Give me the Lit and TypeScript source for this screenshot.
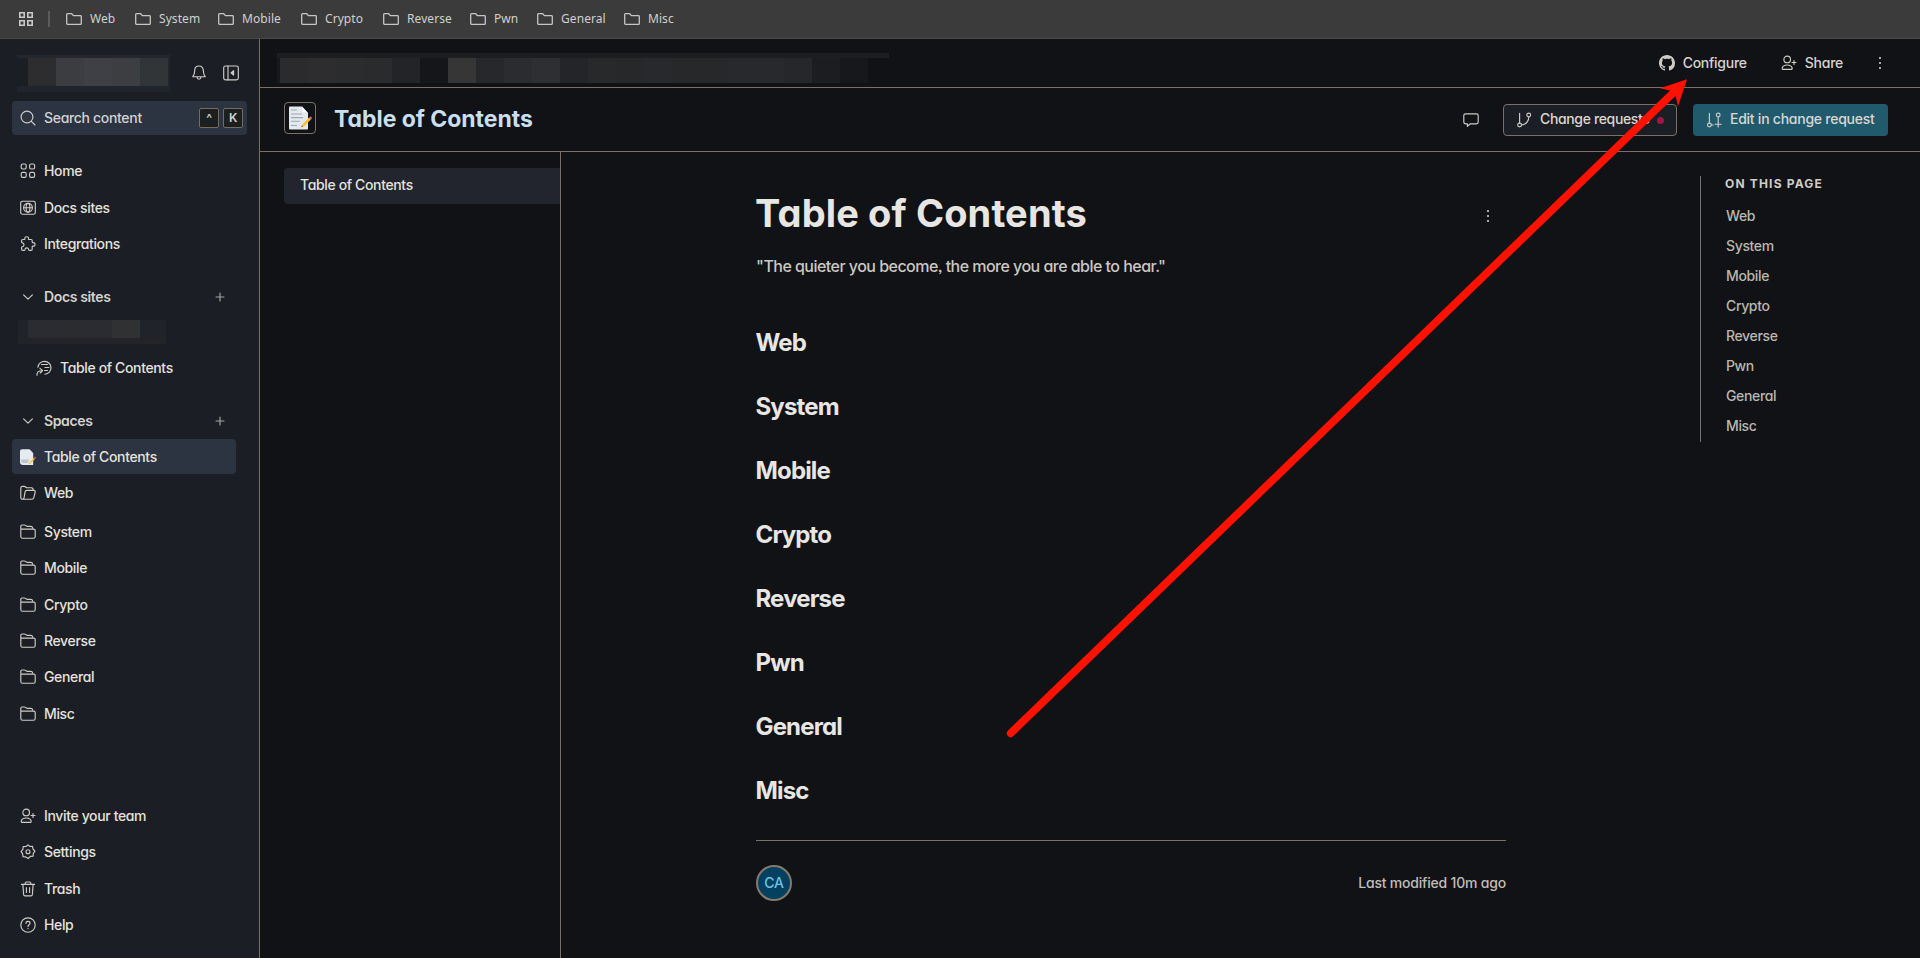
import { LitElement, html, css, svg } from "lit";
import { customElement } from "lit/decorators.js";

const stroke = (body: unknown, size = 16) => html`<svg
  class="ic" width=${size} height=${size} viewBox="0 0 16 16" fill="none"
  stroke="currentColor" stroke-width="1.150" stroke-linecap="round" stroke-linejoin="round">${body}</svg>`;

const icons = {
  home: () => stroke(svg`<rect x="1.200" y="1" width="5" height="5" rx="1.400"/><rect x="9.600" y="1" width="5" height="5" rx="1.400"/><rect x="1.200" y="9.400" width="5" height="5" rx="1.400"/><rect x="9.600" y="9.400" width="5" height="5" rx="1.400"/>`),
  site: () => stroke(svg`<rect x=".7" y="1.200" width="14.600" height="13" rx="1.800"/><circle cx="8" cy="7.700" r="4.400"/><ellipse cx="8" cy="7.700" rx="1.900" ry="4.400"/><path d="M3.600 7.700h8.800"/>`),
  puzzle: () => stroke(svg`<path d="M1.600 4.600c0-.7.4-1.100 1.100-1.100h1.600c.5 0 .7-.3.600-.8C4.700 1.400 5.500.7 6.700.7s2 .7 1.800 2c-.1.500.1.800.6.800h2c.7 0 1.100.4 1.100 1.100v1.500c0 .5.3.7.8.6 1.300-.1 2 .5 2 1.700s-.7 1.800-2 1.700c-.5-.1-.8.1-.8.6v2.500c0 .7-.4 1.100-1.100 1.100H9.300c-.5 0-.7-.3-.7-.8-.1-1-.8-1.600-1.800-1.600s-1.700.6-1.800 1.600c0 .5-.2.800-.7.800H2.700c-.7 0-1.100-.4-1.100-1.100v-1.800c0-.5.3-.7.7-.7 1.100-.1 1.700-.8 1.700-1.900S3.400 7 2.300 6.800c-.4 0-.7-.2-.7-.7z"/>`),
  search: () => stroke(svg`<circle cx="7" cy="7" r="5.900"/><path d="M11.300 11.300 15 15"/>`),
  bell: () => stroke(svg`<path d="M8 1C5.200 1 3.700 3 3.700 5.400c0 3.600-.8 4.800-1.900 6.300h12.400c-1.100-1.500-1.900-2.700-1.900-6.300C12.300 3 10.800 1 8 1zM6 12.200c.2 1.300.9 2 2 2s1.800-.7 2-2"/>`),
  panel: () => stroke(svg`<rect x=".7" y="1" width="14.600" height="13.800" rx="1.800"/><path d="M5 1v13.800"/><path d="M10.600 5.700v4.400L8 7.900z" fill="currentColor"/>`),
  chevron: () => stroke(svg`<path d="m3.600 5.800 4.400 4.400 4.400-4.400"/>`),
  plus: () => stroke(svg`<path d="M8 4v8M4 8h8"/>`),
  link: () => stroke(svg`<path d="M2 7.200A6.500 6.500 0 1 1 9 14.300M5.500 4.500h6M9 7.500h4M8.500 10.500h3M1 15.300c-.3-3 1.200-4.600 5-4.600M4 8.300l2.600 2.400L4.200 13"/>`),
  folder: () => stroke(svg`<path d="M.8 5.100v7.300c0 1.100.8 1.800 1.800 1.800h10.800c1.100 0 1.800-.8 1.800-1.800V6.600c0-1-.6-1.500-1.600-1.500H.8zV2.600C.8 1.600 1.300 1 2.200 1h2.200c1.200 0 1.400 1.300 2.600 1.300h3.800c1 0 1.700.7 1.900 1.700"/>`),
  folderOpen: () => stroke(svg`<path d="M2.700 14.200c-1.200 0-1.900-.7-1.900-1.800V3c0-1.100.6-1.700 1.600-1.700h1.900c1.200 0 1.500 1.400 2.700 1.400h4.400c1.200 0 1.800.8 1.800 2.300M2.700 14.200c1 0 1.200-.6 1.400-1.500L5 7.100C5.200 5.900 5.700 5.400 6.700 5.400h7.200c1 0 1.500.7 1.300 1.600l-1.400 5.700c-.3 1-.8 1.500-1.800 1.500z"/>`),
  invite: () => stroke(svg`<circle cx="6.200" cy="4.400" r="3.300"/><path d="M1.200 13.200c.4-2 2.400-3.200 5-3.200s4.600 1.200 5 3.200c.1.700-.3 1.200-1 1.200h-8c-.7 0-1.100-.5-1-1.200zM13 5.500v4M11 7.500h4"/>`),
  gear: () => stroke(svg`<path d="M8 .9 9.900 2.500l2.600-.1.500 2.600 1.900 2.200-1.600 2.100-.2 2.800-2.700.3L8.200 14.500l-2.500-1.600-2.600-.1-.5-2.900L1.100 7.600 2.900 5.300l.3-2.700 2.800-.1z"/><circle cx="8" cy="7.700" r="2"/>`),
  trash: () => stroke(svg`<path d="M1.400 3.400h13.200M4.900 3.400l.5-1.500c.2-.6.500-.9 1.100-.9h3c.6 0 .9.300 1.100.9l.5 1.500M2.900 3.400l.7 10c.1.900.6 1.400 1.400 1.400h6c.8 0 1.300-.5 1.400-1.400l.7-10M6.400 6.500v5M9.600 6.500v5"/>`),
  help: () => stroke(svg`<circle cx="8" cy="8" r="7.200"/><path d="M6 6.300c0-1.200.8-1.900 2-1.900s2 .7 2 1.800c0 1.500-2 1.500-2 3.200M8 11.400v.2"/>`),
  comment: () => stroke(svg`<path d="M2.500 1.900h11c1 0 1.700.7 1.700 1.700v6.500c0 1-.7 1.700-1.700 1.700H7.400l-3 2.500v-2.500H2.500c-1 0-1.700-.7-1.700-1.700V3.600c0-1 .7-1.700 1.700-1.700z"/>`),
  branch: () => stroke(svg`<circle cx="3.600" cy="13" r="1.900"/><circle cx="12.700" cy="3" r="1.900"/><path d="M3.600 11V1.300M12.700 5c0 4.300-1.600 7-7.200 8"/>`),
  branchPlus: () => stroke(svg`<circle cx="3.400" cy="13" r="1.900"/><circle cx="12.200" cy="3" r="1.900"/><path d="M3.400 11V1.300M12.200 5v9.900M9.200 12.200h6M5.400 13h1.800"/>`),
  dots: () => html`<svg class="ic" width="16" height="16" viewBox="0 0 16 16" fill="currentColor"><circle cx="8" cy="3" r="1.100"/><circle cx="8" cy="8" r="1.100"/><circle cx="8" cy="13" r="1.100"/></svg>`,
  github: () => html`<svg class="ic" width="16" height="16" viewBox="0 0 16 16" fill="currentColor"><path d="M8 0C3.580 0 0 3.580 0 8c0 3.540 2.290 6.530 5.470 7.590.4.070.55-.17.55-.38 0-.19-.01-.82-.01-1.490-2.010.37-2.530-.49-2.690-.94-.09-.23-.48-.94-.82-1.130-.28-.15-.68-.52-.01-.53.63-.01 1.080.58 1.230.82.72 1.210 1.870.87 2.330.66.07-.52.28-.87.51-1.070-1.780-.2-3.640-.89-3.640-3.950 0-.87.31-1.590.82-2.150-.08-.2-.36-1.020.08-2.120 0 0 .67-.21 2.200.82.64-.18 1.320-.27 2-.27s1.360.09 2 .27c1.530-1.040 2.200-.82 2.200-.82.44 1.100.16 1.920.08 2.120.51.56.82 1.270.82 2.150 0 3.070-1.870 3.750-3.650 3.950.29.25.54.73.54 1.480 0 1.070-.01 1.930-.01 2.200 0 .21.15.46.55.38A8.010 8.010 0 0 0 16 8c0-4.420-3.580-8-8-8z"/></svg>`,
  memo: (s: number) => html`<svg class="ic" width=${s} height=${s} viewBox="0 0 24 24">
    <path d="M1 1.800C1 1 1.500.5 2.300.5H14l6 6.500v15.500c0 .6-.4 1-1 1H2.300c-.8 0-1.300-.5-1.300-1.300z" fill="#e3e9ed"/>
    <path d="M14 .5c.8 3 .5 5 0 6 2-.4 4-.3 6 .5z" fill="#f8fafb"/>
    <path d="M3 4h6M3 8h11M3 11.600h12M3 15.200h9M3 19.500h6" stroke="#9daab2" stroke-width="1.100"/>
    <path d="m13.300 21.200 1-2.800L21 11.600l1.900 1.900-6.800 6.800z" fill="#fbc02d"/><path d="m13.300 21.200.6-1.600 1 1z" fill="#5d4037"/>
    <path d="m21 11.600 1-.9c.8-.7 2.500.9 1.800 1.800l-.9 1z" fill="#e0559a"/></svg>`,
  memoSmall: () => html`<svg class="ic" width="16" height="16" viewBox="0 0 16 16">
    <path d="M0 2.500C0 1 .8.200 2.300.200H9.500L13.200 4v12H3C1 16 0 15 0 13z" fill="#e6ebef"/>
    <path d="M1 10.500h8.500L7.500 14H3C1.500 14 1 12.500 1 10.500z" fill="#bdc6cc"/>
    <path d="m8.300 14.800 5.300-5.700 1.200 1.100-5.400 5z" fill="#fbc02d"/><path d="m13.700 8.900 1-1c.6-.4 1.500.4 1.100 1.100l-1 1z" fill="#d9648f"/></svg>`,
};

const TOPICS = ["Web", "System", "Mobile", "Crypto", "Reverse", "Pwn", "General", "Misc"];

const cells = (colors: string[]) => colors.map((c) => html`<i style="background:${c}"></i>`);

@customElement("app-root")
export class AppRoot extends LitElement {
  static styles = css`
    :host { display: flex; flex-direction: column; position: relative; width: 1920px; height: 958px; overflow: hidden;
      background: #111216; color: #e4e2de; font: 500 14px/20px Inter, "Liberation Sans", sans-serif;
      font-feature-settings: "cv11", "ss03"; letter-spacing: -0.36px; }
    * { box-sizing: border-box; }
    .ic { display: block; flex: none; color: #cfccc6; }
    h1, h2, h3, p { margin: 0; }

    .bookmarks { display: flex; align-items: center; height: 39px; flex: none; padding: 0 0 1px 19px; background: #3b3b3b;
      border-bottom: 1px solid #4a4b49; color: #d0d0cf; font: 400 12px/16px "Noto Sans", "Open Sans", sans-serif; letter-spacing: 0.070px; }
    .bookmarks .bar { width: 2px; height: 16px; margin: 0 16px 0 15px; background: #5b5b5b; }
    .marks { display: grid; grid-template-columns: 69px 83px 83px 82px 87px 67px 87px 60px; }
    .mark { display: flex; align-items: center; gap: 8px; }

    .app { display: flex; flex: 1; min-height: 0; }
    .side { width: 260px; flex: none; display: flex; flex-direction: column; background: #1c1e26; border-right: 1px solid #7a7164; }
    .brand { display: flex; height: 62px; padding: 16px 0 0 17px; }
    .brand .ic { margin-top: 10px; }
    .brand .ic + .ic { margin-left: 16px; }
    .mosaic { display: flex; }
    .mosaic i { flex: 1; }
    .m-brand { width: 153px; height: 37px; margin-right: 21px; border-top: 3px solid #24272c; border-bottom: 6px solid #20242d; }
    .m-brand i:first-child { flex: 0 0 11px; } .m-brand i:last-child { flex: 0 0 2px; }
    .search { display: flex; align-items: center; height: 34px; width: 235px; margin-left: 12px; padding: 0 4px 0 8px; border-radius: 4px; background: #2c3341; color: #d4d2ce; }
    .search span { margin-left: 8px; flex: 1; letter-spacing: -0.320px; }
    kbd { width: 20px; height: 20px; margin-left: 4px; border: 1px solid #756b5e; border-radius: 2px; background: #1c1f20; font: 600 12px/17px Inter, sans-serif; text-align: center; }
    .row { display: flex; align-items: center; height: 36.300px; width: 224px; margin-left: 12px; padding-left: 8px; gap: 8px; border-radius: 4px; flex: none; }
    .row.active { background: #2c3341; height: 35px; margin-top: .6px; margin-bottom: .8px; }
    .row.sub { padding-left: 24px; margin-top: 5.600px; }
    .row.head { font-weight: 600; color: #d4d2cd; }
    .row.head span { flex: 1; }
    .row.head .ic:last-child { margin-right: 8px; color: #a6a49f; }
    .first { margin-top: 18.300px; }
    .g1 { margin-top: 16.200px; } .g2 { margin-top: 16.600px; } .g3 { margin-top: 2.500px; }
    .m-side { width: 148px; height: 24px; margin: 5.300px 0 0 18px; border-bottom: 6px solid #222427; flex: none; }
    .m-side i { flex: 0 0 28px; }
    .m-side i:first-child { flex: 0 0 10px; } .m-side i:last-child { flex: 1; }
    .grow { flex: 1; }
    .foot { padding-bottom: 14.800px; }

    .main { flex: 1; min-width: 0; display: flex; flex-direction: column; }
    .top { display: flex; height: 49px; flex: none; padding-right: 32px; border-bottom: 1px solid #7a7164; }
    .m-top { width: 612px; height: 30px; margin: 14px 0 0 17px; border-top: 5px solid #1d1e20; }
    .m-top i { flex: 0 0 28px; } .m-top i:first-child { flex: 0 0 3px; }
    .act { display: flex; align-items: center; gap: 8px; color: #d6d3ce; letter-spacing: -0.260px; }
    .act span { margin-top: -1px; }
    .share { margin: 0 29px 0 34px; }
    .titlebar { display: flex; align-items: center; height: 64px; flex: none; padding: 0 32px 0 24px; border-bottom: 1px solid #7a7164; }
    .emoji { display: grid; place-items: center; width: 32px; height: 32px; margin-top: -3px; border: 1px solid #7a7164; border-radius: 4px; }
    .titlebar h1 { margin: -2px 0 0 18px; font-size: 23px; line-height: 32px; font-weight: 700; color: #c9dfef; letter-spacing: -0.040px; }
    .btn { display: flex; align-items: center; height: 32px; border-radius: 4px; margin-top: 1px; color: #dad7d2; letter-spacing: -0.250px; }
    .btn span { margin-top: -1.500px; }
    .change { width: 174px; margin-left: 24px; margin-right: 16px; padding-left: 12px; border: 1px solid #7a7164; background: #1c1e26; gap: 8px; letter-spacing: -0.350px; }
    .dot { width: 7px; height: 7px; border-radius: 50%; background: #9c1848; margin-left: -1px; }
    .edit { width: 195px; padding-left: 13px; gap: 8px; background: #225a6d; }
    .body { display: flex; flex: 1; min-height: 0; }
    .pages { width: 301px; flex: none; padding: 16px 0 0 24px; border-right: 1px solid #7a7164; }
    .pages div { height: 36px; padding: 7px 0 0 16px; border-radius: 4px 0 0 4px; background: #22252e; }
    .doc { width: 750px; margin-left: 195px; flex: none; }
    .doc .hd { display: flex; justify-content: space-between; padding: 38px 10px 0 0; }
    .doc h1 { margin: -1px 0 0 -1px; font-size: 38px; line-height: 48px; font-weight: 700; color: #e8e6e3; letter-spacing: 0.140px; }
    .hd .ic { margin-top: 18px; }
    .doc p { margin: 17px 0 17px; font-size: 16px; line-height: 24px; font-weight: 450; color: #cbc8c2; letter-spacing: -0.530px; }
    .doc h2 { height: 64px; margin-left: -.5px; padding-top: 32px; font-size: 24px; line-height: 32px; font-weight: 650; color: #e8e6e3; letter-spacing: -0.850px; }
    .doc .end { display: flex; justify-content: space-between; align-items: center; margin-top: 33px; padding-top: 24px; border-top: 1px solid #7a7164; color: #c1beb8; font-weight: 450; letter-spacing: -0.200px; }
    .avatar { width: 36px; height: 36px; border: 2px solid #857a6e; border-radius: 50%; background: #04405f; color: #6cc3e4; text-align: center; line-height: 32px; }
    .toc { height: 266px; margin: 24px 0 0 194px; padding: 0 0 0 24px; border-left: 1px solid #7a7164; color: #bab7b0; font-weight: 450; }
    .toc h3 { font-size: 12px; line-height: 16px; margin-bottom: 9px; font-weight: 700; color: #cfccc6; letter-spacing: 1.180px; }
    .toc div { height: 30px; line-height: 30px; padding-left: 1px; }
    .arrow { position: absolute; left: 0; top: 0; pointer-events: none; }
  `;

  row(icon: unknown, label: string, cls = "") {
    return html`<div class="row ${cls}">${icon}<span>${label}</span></div>`;
  }
  head(label: string, cls: string) {
    return html`<div class="row head ${cls}">${icons.chevron()}<span>${label}</span>${icons.plus()}</div>`;
  }

  render() {
    return html`
      <div class="bookmarks">
        <svg width="14" height="14" viewBox="0 0 14 14" fill="none" stroke="#c9c9c9" stroke-width="1.600"><path d="M.8.8h4.400v4.400H.8zM8.800.8h4.400v4.400H8.800zM.8 8.800h4.400v4.400H.8zM8.800 8.800h4.400v4.400H8.800z"/></svg>
        <div class="bar"></div>
        <div class="marks">${TOPICS.map((t) => html`<div class="mark">
          <svg width="16" height="12" viewBox="0 0 16 12" fill="none" stroke="#c6c6c5" stroke-width="1.300" stroke-linejoin="round"><path d="M.7 1.500c0-.5.300-.8.800-.8h4.200l1.700 1.900h7c.5 0 .9.300.9.800v7c0 .500-.4.900-.9.900H1.500c-.5 0-.8-.4-.8-.9z"/></svg>${t}</div>`)}</div>
      </div>
      <div class="app">
        <div class="side">
          <div class="brand"><div class="mosaic m-brand">${cells(["#1b1e22", "#2d2d2f", "#3b3d41", "#3e4045", "#3c3e42", "#323537", "#22252a"])}</div>${icons.bell()}${icons.panel()}</div>
          <div class="search">${icons.search()}<span>Search content</span><kbd>^</kbd><kbd>K</kbd></div>
          ${this.row(icons.home(), "Home", "first")}${this.row(icons.site(), "Docs sites")}${this.row(icons.puzzle(), "Integrations")}
          ${this.head("Docs sites", "g1")}
          <div class="mosaic m-side">${cells(["#202327", "#2a2c32", "#2b2c2f", "#2a2c31", "#2f3133", "#20232a"])}</div>
          ${this.row(icons.link(), "Table of Contents", "sub")}
          ${this.head("Spaces", "g2")}
          ${this.row(icons.memoSmall(), "Table of Contents", "active")}
          ${this.row(icons.folderOpen(), "Web")}
          ${TOPICS.filter((t) => t !== "Web" && t !== "Pwn").map((t, i) => this.row(icons.folder(), t, i ? "" : "g3"))}
          <div class="grow"></div>
          <div class="foot">${this.row(icons.invite(), "Invite your team")}${this.row(icons.gear(), "Settings")}${this.row(icons.trash(), "Trash")}${this.row(icons.help(), "Help")}</div>
        </div>
        <div class="main">
          <div class="top">
            <div class="mosaic m-top">${cells(["#17181b", "#2b2b2d", "#2d2d2f", "#2b2c2d", "#2a2b2c", "#232427", "#15161a", "#363637", "#27282b", "#2b2c2f", "#2e2f33", "#242528", "#28292a", "#27282a", "#28292c", "#27282a", "#272829", "#28292c", "#28292c", "#26272a", "#1c1d20", "#17181b"])}</div>
            <div class="grow"></div>
            <div class="act">${icons.github()}<span>Configure</span></div>
            <div class="act share">${icons.invite()}<span>Share</span></div>
            <div class="act">${icons.dots()}</div>
          </div>
          <div class="titlebar">
            <div class="emoji">${icons.memo(24)}</div><h1>Table of Contents</h1><div class="grow"></div>
            ${icons.comment()}
            <div class="btn change">${icons.branch()}<span>Change requests</span><div class="dot"></div></div>
            <div class="btn edit">${icons.branchPlus()}<span>Edit in change request</span></div>
          </div>
          <div class="body">
            <div class="pages"><div>Table of Contents</div></div>
            <div class="doc">
              <div class="hd"><h1>Table of Contents</h1>${icons.dots()}</div>
              <p>"The quieter you become, the more you are able to hear."</p>
              ${TOPICS.map((t) => html`<h2>${t}</h2>`)}
              <div class="end"><div class="avatar">CA</div><span>Last modified 10m ago</span></div>
            </div>
            <div class="toc"><h3>ON THIS PAGE</h3>${TOPICS.map((t) => html`<div>${t}</div>`)}</div>
          </div>
        </div>
      </div>
      <svg class="arrow" width="1920" height="958"><path d="M1010.700 733.300 1673 93" stroke="#ff1100" stroke-width="7.800" stroke-linecap="round"/><path d="M1687 79.300 1660 88.300l10 2.200 5.700 5.800 2.300 10.300z" fill="#ff1100"/></svg>
    `;
  }
}
